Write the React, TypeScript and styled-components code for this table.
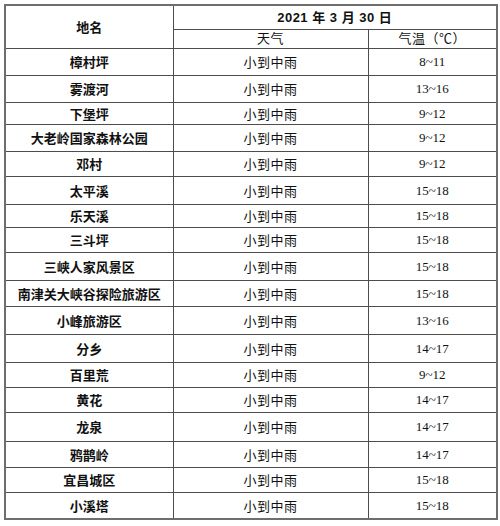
import React, { FunctionComponent } from 'react';
import styled, { createGlobalStyle } from 'styled-components';

const GlobalStyle = createGlobalStyle`
  html, body {
    margin: 0;
    padding: 0;
    background: #ffffff;
  }
`;

const Page = styled.div`
  width: 500px;
  height: 526px;
  padding: 4px 0 0 4px;
  box-sizing: border-box;
  background: #ffffff;
`;

const Table = styled.table`
  border-collapse: collapse;
  table-layout: fixed;
  width: 492px;
  border: 2px solid #6e6e6e;
  color: #111111;
  font-family: 'Liberation Sans', 'Noto Sans CJK SC', sans-serif;
  font-size: 13px;
`;

const Row = styled.tr<{ $h: number }>`
  height: ${(props) => props.$h}px;
`;

const Cell = styled.td`
  border: 1px solid #4d4d4d;
  padding: 0;
  text-align: center;
  vertical-align: middle;
  line-height: 1;
  white-space: nowrap;
`;

const HeadCell = styled(Cell)`
  font-weight: bold;
  font-family: 'Noto Sans CJK SC', sans-serif;
`;

const DateCell = styled(Cell)`
  font-weight: bold;
  letter-spacing: 0.5px;
`;

const SubHeadCell = styled(Cell)`
  font-weight: normal;
  letter-spacing: 0.5px;
`;

const NameCell = styled(Cell)`
  font-weight: bold;
  font-family: 'Noto Sans CJK SC', sans-serif;
`;

const WeatherCell = styled(Cell)`
  font-family: 'Noto Sans CJK SC', sans-serif;
  letter-spacing: 0.5px;
`;

const TempCell = styled(Cell)`
  font-family: 'Liberation Serif', serif;
  font-size: 13px;
`;

interface Place {
  name: string;
  temp: string;
  h: number;
}

const places: Place[] = [
  { name: '樟村坪', temp: '8~11', h: 27 },
  { name: '雾渡河', temp: '13~16', h: 27 },
  { name: '下堡坪', temp: '9~12', h: 22 },
  { name: '大老岭国家森林公园', temp: '9~12', h: 27 },
  { name: '邓村', temp: '9~12', h: 25 },
  { name: '太平溪', temp: '15~18', h: 28 },
  { name: '乐天溪', temp: '15~18', h: 23 },
  { name: '三斗坪', temp: '15~18', h: 25 },
  { name: '三峡人家风景区', temp: '15~18', h: 28 },
  { name: '南津关大峡谷探险旅游区', temp: '15~18', h: 26 },
  { name: '小峰旅游区', temp: '13~16', h: 28 },
  { name: '分乡', temp: '14~17', h: 28 },
  { name: '百里荒', temp: '9~12', h: 25 },
  { name: '黄花', temp: '14~17', h: 25 },
  { name: '龙泉', temp: '14~17', h: 29 },
  { name: '鸦鹊岭', temp: '14~17', h: 26 },
  { name: '宜昌城区', temp: '15~18', h: 25 },
  { name: '小溪塔', temp: '15~18', h: 27 },
];

const App: FunctionComponent = () => {
  return (
    <Page>
      <GlobalStyle />
      <Table>
        <colgroup>
          <col style={{ width: 168 }} />
          <col style={{ width: 195 }} />
          <col style={{ width: 129 }} />
        </colgroup>
        <tbody>
          <Row $h={24}>
            <HeadCell rowSpan={2}>地名</HeadCell>
            <DateCell colSpan={2}>2021 年 3 月 30 日</DateCell>
          </Row>
          <Row $h={19}>
            <SubHeadCell>天气</SubHeadCell>
            <SubHeadCell>气温（℃）</SubHeadCell>
          </Row>
          {places.map((p) => (
            <Row $h={p.h} key={p.name}>
              <NameCell>{p.name}</NameCell>
              <WeatherCell>小到中雨</WeatherCell>
              <TempCell>{p.temp}</TempCell>
            </Row>
          ))}
        </tbody>
      </Table>
    </Page>
  );
};

export default App;
